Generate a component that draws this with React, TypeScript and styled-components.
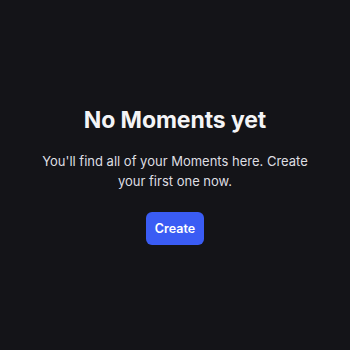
import styled, { createGlobalStyle } from 'styled-components';

const GlobalStyle = createGlobalStyle`
  html, body {
    margin: 0;
    padding: 0;
    background: #141418;
  }
  body {
    font-family: Inter, "Noto Sans", sans-serif;
  }
`;

const Page = styled.div`
  width: 350px;
  height: 350px;
  display: flex;
  align-items: center;
  justify-content: center;
  background: #141418;
`;

const Empty = styled.div`
  display: flex;
  flex-direction: column;
  align-items: center;
  width: 290px;
  text-align: center;
  margin-top: 0;
`;

const Title = styled.h2`
  margin: 0;
  font-size: 23px;
  font-weight: 700;
  color: #f4f4f6;
  letter-spacing: -0.1px;
`;

const Text = styled.p`
  margin: 17px 0 0;
  font-size: 13px;
  line-height: 20px;
  color: #dedee2;
`;

const Button = styled.button`
  margin-top: 21px;
  height: 33px;
  padding: 0 9px;
  border: none;
  border-radius: 6px;
  background: #3a5cf4;
  color: #fff;
  font-family: inherit;
  font-size: 12.5px;
  font-weight: 600;
  cursor: pointer;
`;

export default function App() {
  return (
    <>
      <GlobalStyle />
      <Page>
        <Empty>
          <Title>No Moments yet</Title>
          <Text>You'll find all of your Moments here. Create your first one now.</Text>
          <Button>Create</Button>
        </Empty>
      </Page>
    </>
  );
}
